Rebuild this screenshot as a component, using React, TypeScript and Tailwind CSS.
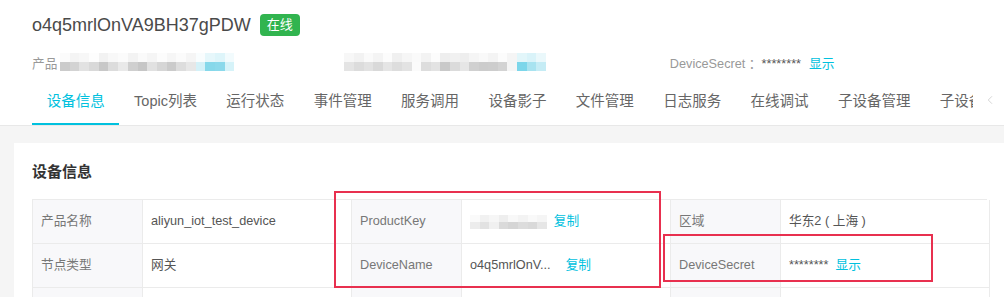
import { ChevronLeft } from 'lucide-react'

const tabs = [
  '设备信息',
  'Topic列表',
  '运行状态',
  '事件管理',
  '服务调用',
  '设备影子',
  '文件管理',
  '日志服务',
  '在线调试',
  '子设备管理',
  '子设备分组',
]

// pixelated (mosaic) blocks standing in for masked text
const mosaicA = {
  top: [
    'bg-[#fbfbfb]', 'bg-[#f4f4f4]', 'bg-[#f7f7f7]', 'bg-[#fdfdfd]', 'bg-[#f2f2f2]', 'bg-[#f8f8f8]',
    'bg-[#fbfbfb]', 'bg-[#f3f3f3]', 'bg-[#fafafa]', 'bg-[#f5f5f5]', 'bg-[#fcfcfc]', 'bg-[#f6f6f6]',
    'bg-[#fbfbfb]', 'bg-[#f5f5f5]', 'bg-[#f9fdfe]', 'bg-[#e6f7fb]', 'bg-[#def5fa]', 'bg-[#f2fbfd]',
  ],
  bottom: [
    'bg-[#cbcbcb]', 'bg-[#d3d3d3]', 'bg-[#e2e2e2]', 'bg-[#d9d9d9]', 'bg-[#c8c8c8]', 'bg-[#dcdcdc]',
    'bg-[#e9e9e9]', 'bg-[#cfcfcf]', 'bg-[#c6c6c6]', 'bg-[#e1e1e1]', 'bg-[#d6d6d6]', 'bg-[#cbcbcb]',
    'bg-[#dddddd]', 'bg-[#e7e7e7]', 'bg-[#d4f1f8]', 'bg-[#86d8ea]', 'bg-[#8bd9eb]', 'bg-[#d6f3f9]',
  ],
}

const mosaicB = {
  top: [
    'bg-[#f7f7f7]', 'bg-[#f2f2f2]', 'bg-[#fafafa]', 'bg-[#f4f4f4]', 'bg-[#fcfcfc]', 'bg-[#f0f0f0]',
    'bg-[#f6f6f6]', 'bg-[#fafafa]', 'bg-[#f3f3f3]', 'bg-[#fcfcfc]', 'bg-[#eeeeee]', 'bg-[#f1f1f1]',
    'bg-[#eeeeee]', 'bg-[#f5f5f5]', 'bg-[#f9f9f9]', 'bg-[#f4f4f4]', 'bg-[#fcfcfc]', 'bg-[#f5f5f5]',
    'bg-[#e2f6fa]', 'bg-[#d9f3f9]', 'bg-[#eaf8fb]',
  ],
  bottom: [
    'bg-[#e4e4e4]', 'bg-[#dcdcdc]', 'bg-[#e2e2e2]', 'bg-[#d9d9d9]', 'bg-[#e5e5e5]', 'bg-[#dddddd]',
    'bg-[#e3e3e3]', 'bg-[#fbfbfb]', 'bg-[#dddddd]', 'bg-[#e3e3e3]', 'bg-[#c9c9c9]', 'bg-[#dbdbdb]',
    'bg-[#e6e6e6]', 'bg-[#d0d0d0]', 'bg-[#cccccc]', 'bg-[#cdcdcd]', 'bg-[#d3d3d3]', 'bg-[#f5f5f5]',
    'bg-[#7cd6ea]', 'bg-[#a8e3f0]', 'bg-[#c5ecf5]',
  ],
}

const mosaicC = {
  top: ['bg-[#fafafa]', 'bg-[#f1f1f1]', 'bg-[#f6f6f6]', 'bg-[#eeeeee]', 'bg-[#f8f8f8]', 'bg-[#f3f3f3]', 'bg-[#f9f9f9]', 'bg-[#f5f5f5]'],
  bottom: ['bg-[#ececec]', 'bg-[#e2e2e2]', 'bg-[#f0f0f0]', 'bg-[#dadada]', 'bg-[#d5d5d5]', 'bg-[#dcdcdc]', 'bg-[#d9d9d9]', 'bg-[#e6e6e6]'],
}

function Mosaic({ data, cell }: { data: { top: string[]; bottom: string[] }; cell: string }) {
  return (
    <div className="flex flex-col">
      <div className="flex">
        {data.top.map((c, i) => (
          <div key={i} className={`${cell} ${c}`} />
        ))}
      </div>
      <div className="flex">
        {data.bottom.map((c, i) => (
          <div key={i} className={`${cell} ${c}`} />
        ))}
      </div>
    </div>
  )
}

function Cell({ label, children }: { label: string; children: React.ReactNode }) {
  return (
    <>
      <div className="flex h-[44px] w-[110px] items-center border-r border-b border-[#ebebeb] bg-[#f8f8fa] pl-[8px] text-[#777]">
        {label}
      </div>
      <div className="flex h-[44px] w-[209px] items-center border-r border-b border-[#ebebeb] pl-[8px] text-[#555]">
        {children}
      </div>
    </>
  )
}

export default function App() {
  return (
    <div className="relative h-[297px] w-[1004px] overflow-hidden bg-white font-['Liberation_Sans','Noto_Sans_CJK_SC',sans-serif]">
      {/* header */}
      <div className="px-[32px] pt-[12px]">
        <div className="flex h-[26px] items-center gap-[9px]">
          <span className="text-[18px] leading-[26px] text-[#4a4a4a]">o4q5mrlOnVA9BH37gPDW</span>
          <span className="flex h-[22px] items-center rounded-[4px] bg-[#31b44f] px-[7px] text-[13px] text-white">
            在线
          </span>
        </div>
        <div className="mt-[18px] flex h-[18px] items-center text-[12.7px] text-[#999]">
          <span className="w-[28px]">产品</span>
          <div className="-mt-[6px]">
            <Mosaic data={mosaicA} cell="h-[9px] w-[9.7px]" />
          </div>
          <div className="ml-[110px] -mt-[6px]">
            <Mosaic data={mosaicB} cell="h-[9px] w-[9.6px]" />
          </div>
          <span className="ml-[124px]">DeviceSecret ：</span>
          <span className="text-[#555]">********</span>
          <span className="ml-[8px] text-[#00c1de]">显示</span>
        </div>
      </div>

      {/* tabs */}
      <div className="mt-[6px] flex h-[46px] border-b border-[#e8e8e8] pl-[32px]">
        <div className="flex w-[941px] overflow-hidden">
          {tabs.map((t, i) => (
            <div
              key={t}
              className={
                i === 0
                  ? 'flex h-[45px] shrink-0 items-center border-b-2 border-[#00c1de] px-[14.7px] text-[14.5px] whitespace-nowrap text-[#00c1de]'
                  : 'flex h-[45px] shrink-0 items-center border-b-2 border-transparent px-[14.7px] text-[14.5px] whitespace-nowrap text-[#666]'
              }
            >
              {t}
            </div>
          ))}
        </div>
        <div className="flex h-[40px] items-center pl-[10px] text-[#c4c4c4]">
          <ChevronLeft size={14} strokeWidth={1.2} />
        </div>
      </div>

      {/* body */}
      <div className="h-[200px] bg-[#f5f5f5] pt-[17px] pl-[14px]">
        <div className="h-full bg-white pt-[19px] pl-[18px]">
          <h2 className="text-[15px] leading-[20px] font-bold text-[#333]">设备信息</h2>
          <div className="mt-[17px] grid w-[955px] grid-cols-[110px_209px_110px_209px_110px_209px] border-t border-l border-[#ebebeb] text-[12.7px]">
            <Cell label="产品名称">aliyun_iot_test_device</Cell>
            <Cell label="ProductKey">
              <Mosaic data={mosaicC} cell="h-[7px] w-[9.6px]" />
              <span className="ml-[7px] text-[#00c1de]">复制</span>
            </Cell>
            <Cell label="区域">华东2 ( 上海 )</Cell>
            <Cell label="节点类型">网关</Cell>
            <Cell label="DeviceName">
              <span className="text-[#555]">o4q5mrlOnV...</span>
              <span className="ml-[15px] text-[#00c1de]">复制</span>
            </Cell>
            <Cell label="DeviceSecret">
              <span>********</span>
              <span className="ml-[7px] text-[#00c1de]">显示</span>
            </Cell>
            <Cell label="">{''}</Cell>
            <Cell label="">{''}</Cell>
            <Cell label="">{''}</Cell>
          </div>
        </div>
      </div>

      {/* annotation boxes */}
      <div className="absolute top-[191px] left-[334px] h-[97px] w-[327px] border-2 border-[#e8304f]" />
      <div className="absolute top-[234px] left-[663px] h-[48px] w-[270px] border-2 border-[#e8304f]" />
    </div>
  )
}
